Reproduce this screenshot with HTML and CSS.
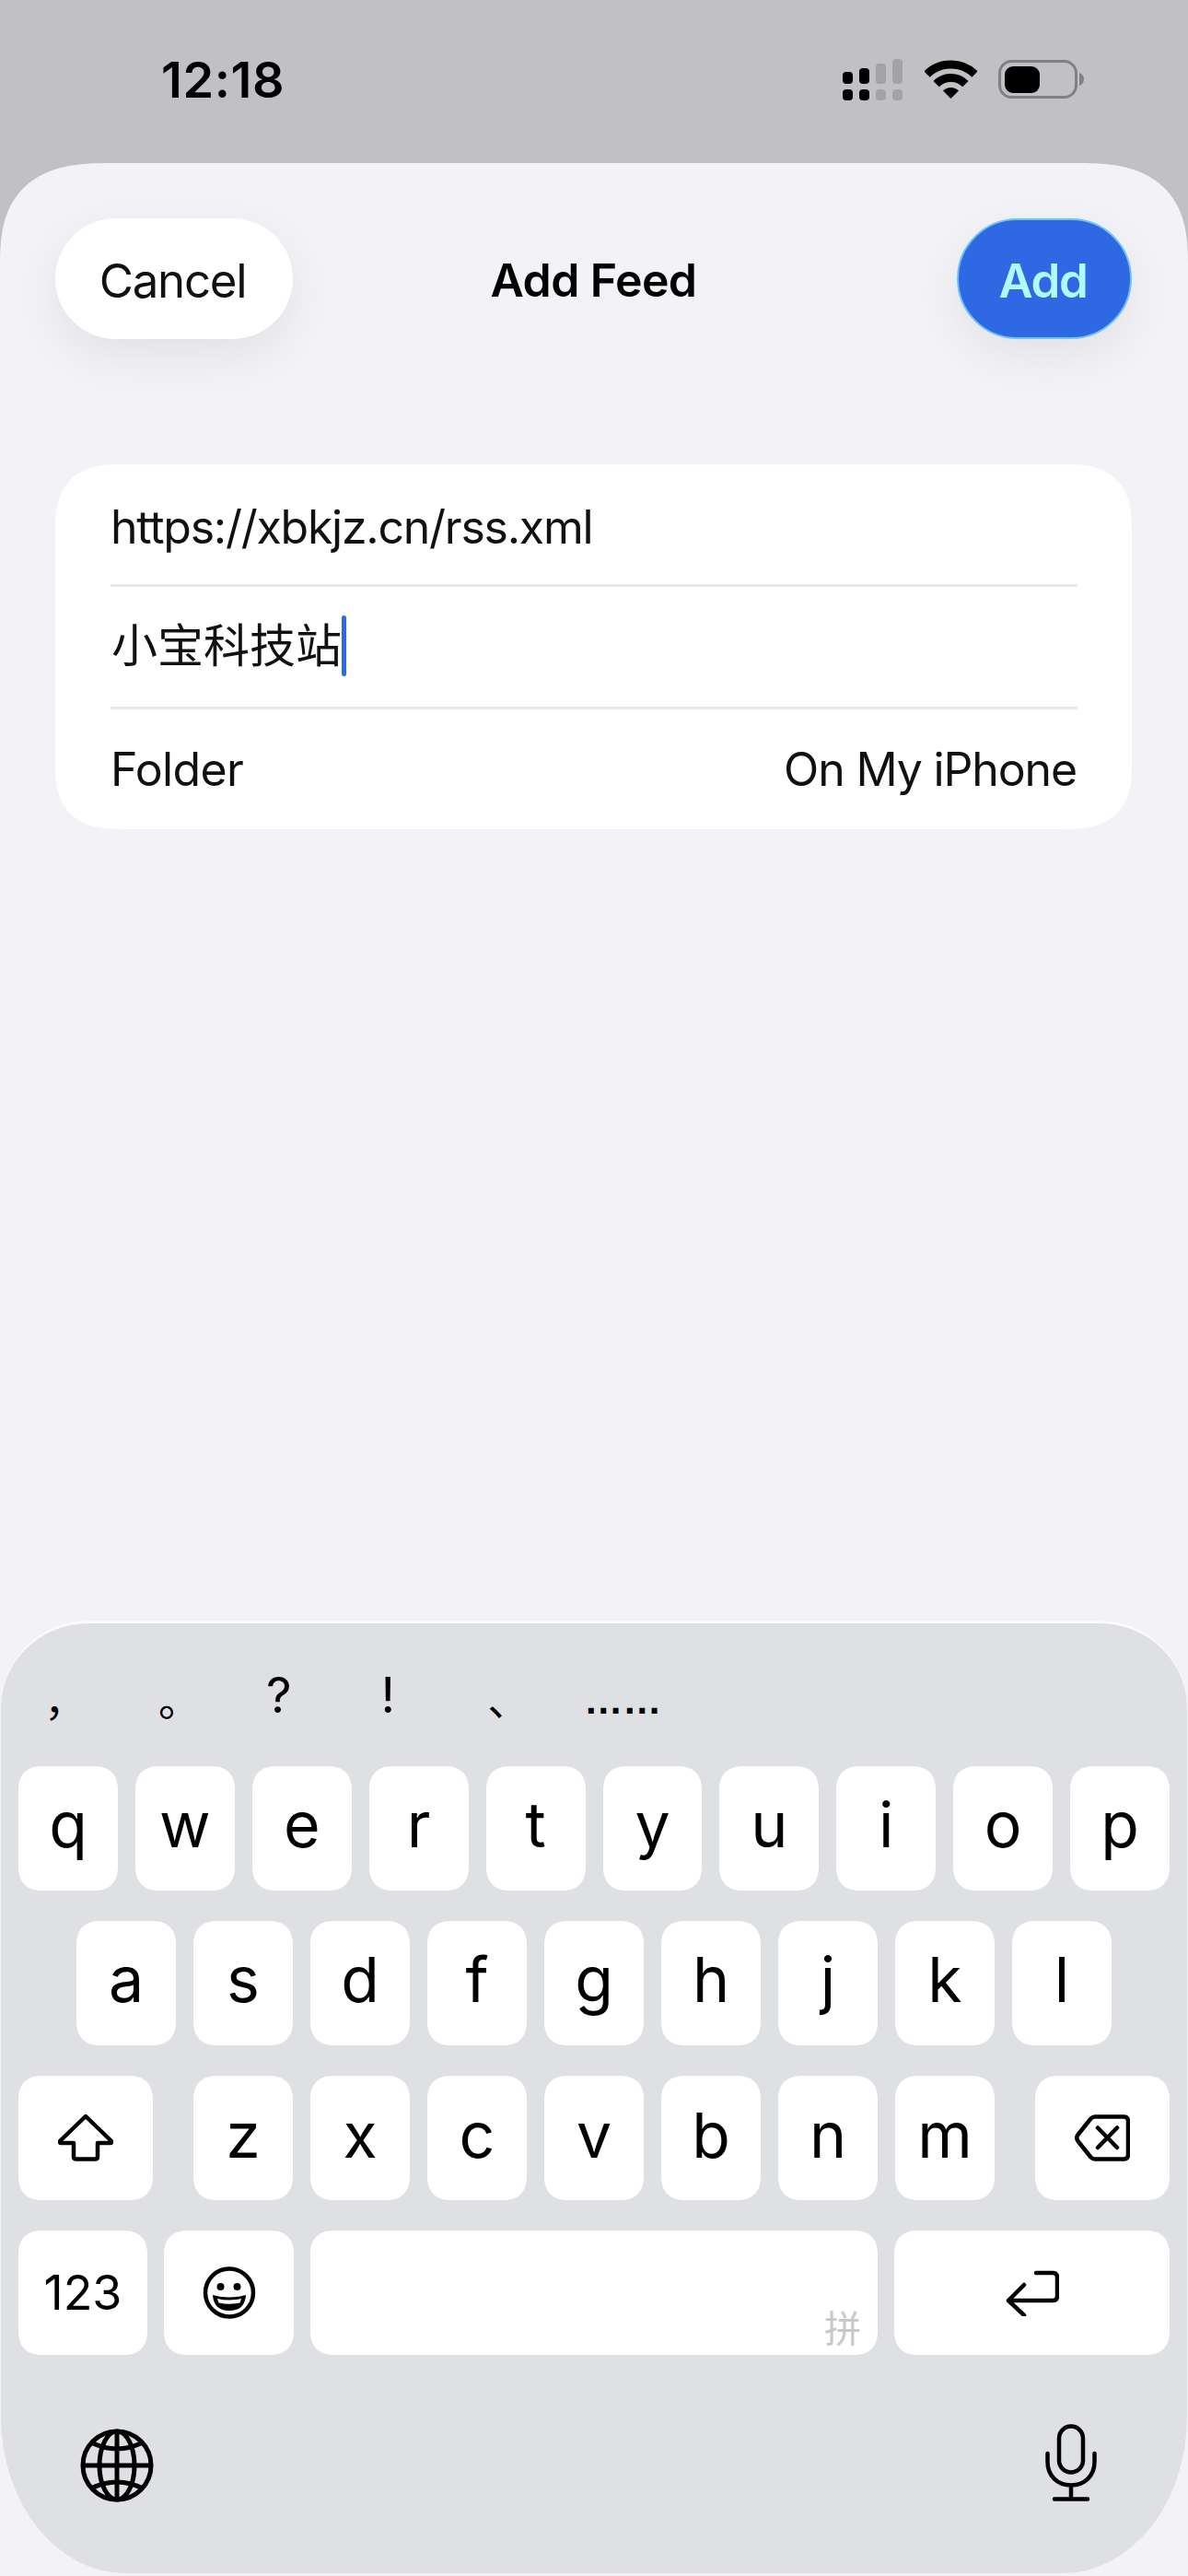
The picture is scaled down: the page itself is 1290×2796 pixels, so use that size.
FILE: index.html
```html
<!DOCTYPE html>
<html lang="en">
<head>
<meta charset="utf-8">
<title>Add Feed</title>
<link rel="stylesheet" href="styles.css">
</head>
<body>
<div class="phone">
  <header class="status">
    <div class="time">12:18</div>
    <div class="status-icons">
      <svg class="ic-signal" width="66" height="45" viewBox="0 0 66 45">
        <g fill="#000"><rect x="0" y="14" width="11" height="13" rx="4"/><rect x="18" y="10" width="11" height="17" rx="4"/><rect x="0" y="33" width="11" height="12" rx="4"/><rect x="18" y="33" width="11" height="12" rx="4"/></g>
        <g fill="#a3a3a7"><rect x="36" y="5" width="11" height="22" rx="4"/><rect x="54" y="0" width="11" height="27" rx="4"/><rect x="36" y="33" width="11" height="12" rx="4"/><rect x="54" y="33" width="11" height="12" rx="4"/></g>
      </svg>
      <svg class="ic-wifi" width="57" height="42" viewBox="0 0 57 42">
        <path d="M2.5 15.5A37.5 37.5 0 0 1 54.5 15.5M12.6 26.1A22.5 22.5 0 0 1 44.4 26.1" fill="none" stroke="#000" stroke-width="9"/>
        <path d="M28.5 42L20 33.5A12 12 0 0 1 37 33.5Z" fill="#000"/>
      </svg>
      <svg class="ic-batt" width="93" height="42" viewBox="0 0 93 42">
        <rect x="1.5" y="1.5" width="83" height="39" rx="13" fill="none" stroke="#808085" stroke-width="3"/>
        <rect x="7" y="7" width="38" height="29" rx="9" fill="#000"/>
        <path d="M88 14C91 15 93 18 93 21C93 24 91 27 88 28Z" fill="#808085"/>
      </svg>
    </div>
  </header>

  <main class="sheet">
    <nav class="nav">
      <div class="pill pill-cancel">Cancel</div>
      <div class="nav-title">Add Feed</div>
      <div class="pill pill-add">Add</div>
    </nav>

    <section class="card">
      <div class="row"><span class="url">https://xbkjz.cn/rss.xml</span></div>
      <div class="sep"></div>
      <div class="row"><span class="cjk" lang="zh-CN">小宝科技站</span><span class="caret"></span></div>
      <div class="sep"></div>
      <div class="row row-split"><span class="lbl">Folder</span><span class="val">On My iPhone</span></div>
    </section>

    <section class="keyboard">
      <div class="cands" lang="zh-CN">
        <span class="cand cand-comma">，</span>
        <span class="cand cand-period">。</span>
        <span class="cand latin cand-q">?</span>
        <span class="cand latin cand-ex">!</span>
        <span class="cand cand-pause">、</span>
        <span class="cand dots">……</span>
      </div>
      <div class="keys">
        <div class="krow krow-1">
          <div class="key">q</div><div class="key">w</div><div class="key">e</div><div class="key">r</div><div class="key">t</div><div class="key">y</div><div class="key">u</div><div class="key">i</div><div class="key">o</div><div class="key">p</div>
        </div>
        <div class="krow krow-2">
          <div class="key">a</div><div class="key">s</div><div class="key">d</div><div class="key">f</div><div class="key">g</div><div class="key">h</div><div class="key">j</div><div class="key">k</div><div class="key">l</div>
        </div>
        <div class="krow krow-3">
          <div class="key key-mod">
            <svg width="60" height="51" viewBox="0 0 60 51"><path d="M30 2L2.5 28.5Q1 31 3.5 31H17V45.500Q17 48.500 20 48.500H40Q43 48.500 43 45.500V31H56.500Q59 31 57.500 28.500Z" fill="none" stroke="#000" stroke-width="4.500" stroke-linejoin="round"/></svg>
          </div>
          <div class="letters">
            <div class="key">z</div><div class="key">x</div><div class="key">c</div><div class="key">v</div><div class="key">b</div><div class="key">n</div><div class="key">m</div>
          </div>
          <div class="key key-mod">
            <svg width="60" height="51" viewBox="0 0 60 51"><path d="M22 2.500H53Q58 2.500 58 7.500V43.500Q58 48.500 53 48.500H22Q19.500 48.500 17.500 46.500L3.500 29Q1 25.500 3.500 22L17.500 4.500Q19.500 2.500 22 2.500ZM25 14.500L46 36M46 14.500L25 36" fill="none" stroke="#000" stroke-width="4.500" stroke-linejoin="round" stroke-linecap="round"/></svg>
          </div>
        </div>
        <div class="krow krow-4">
          <div class="key key-123">123</div>
          <div class="key key-emoji">
            <svg width="58" height="57" viewBox="0 0 58 57"><circle cx="29" cy="28.500" r="26" fill="none" stroke="#000" stroke-width="4.500"/><circle cx="19.500" cy="22" r="4" fill="#000"/><circle cx="37.500" cy="22" r="4" fill="#000"/><path d="M11 31Q29 36 47 31Q46 48 29 48Q12 48 11 31Z" fill="#000"/><path d="M16 35Q29 38 42 35L40.500 39.500Q29 42 17.500 39.500Z" fill="#fff"/></svg>
          </div>
          <div class="key key-space"><span class="pinyin" lang="zh-CN">拼</span></div>
          <div class="key key-return">
            <svg width="58" height="50" viewBox="0 0 58 50"><path d="M33 3H51Q56 3 56 8V28Q56 33 51 33H3M20 16L3 33L20 49" fill="none" stroke="#000" stroke-width="4.500" stroke-linecap="round" stroke-linejoin="round"/></svg>
          </div>
        </div>
      </div>
      <div class="kb-bottom">
        <svg class="ic-globe" width="80" height="80" viewBox="0 0 80 80"><g fill="none" stroke="#000" stroke-width="5"><circle cx="40" cy="40" r="37"/><ellipse cx="40" cy="40" rx="19" ry="37"/><path d="M40 3V77M3 40H77M12 15Q40 29 68 15M12 65Q40 51 68 65"/></g></svg>
        <svg class="ic-mic" width="56" height="84" viewBox="0 0 56 84"><g fill="none" stroke="#000" stroke-width="4.500" stroke-linecap="round"><rect x="15" y="2.500" width="26" height="50" rx="13"/><path d="M2.500 32V41C2.500 56 13 66.500 28 66.500C43 66.500 53.500 56 53.500 41V32M28 66.500V81M10 81.500H46"/></g></svg>
      </div>
    </section>
  </main>
</div>
</body>
</html>
```

FILE: styles.css
```css
* { box-sizing: border-box; }
html, body { margin: 0; padding: 0; }
body {
  width: 1290px;
  height: 2796px;
  overflow: hidden;
  background: #c1c0c5;
  color: #000;
  font-family: Inter, "Noto Sans CJK SC", sans-serif;
}
.phone { display: flex; flex-direction: column; height: 2796px; }

.status { height: 177px; flex: none; display: flex; align-items: flex-start; padding: 59px 113px 0 175px; }
.time { font-size: 54px; font-weight: 600; line-height: 56px; letter-spacing: 0.6px; }
.status-icons { margin-left: auto; margin-top: 5px; display: flex; align-items: flex-start; gap: 23px; }
.status-icons svg { display: block; }
.ic-wifi, .ic-batt { margin-top: 1px; }

.sheet {
  flex: 1;
  display: flex;
  flex-direction: column;
  background: #f2f2f7;
  border-radius: 118px 118px 0 0 / 110px 110px 0 0;
  corner-shape: superellipse(1.4);
}

.nav {
  display: grid;
  grid-template-columns: 1fr auto 1fr;
  align-items: center;
  margin: 60px 61px 0 60px;
}
.pill {
  height: 131px;
  border-radius: 66px;
  display: flex;
  align-items: center;
  justify-content: center;
  font-size: 51px;
  letter-spacing: -1.3px;
  padding-top: 3px;
}
.pill-cancel {
  width: 258px;
  justify-self: start;
  background: #fff;
  color: #111;
  padding-right: 3px;
  box-shadow: 0 18px 50px rgba(0, 0, 0, 0.07);
}
.pill-add {
  width: 190px;
  justify-self: end;
  background: #2f68e3;
  border: 2px solid #6cc3f4;
  color: #aefbff;
  font-weight: 600;
  padding-right: 3px;
  box-shadow: 0 18px 50px rgba(0, 0, 0, 0.07);
}
.nav-title { font-size: 50px; font-weight: 600; letter-spacing: -0.6px; padding-top: 3px; }

.card {
  margin: 136px 61px 0 60px;
  background: #fff;
  border-radius: 72px;
  corner-shape: superellipse(1.4);
  padding: 0 59px 0 60px;
}
.row { height: 130px; display: flex; align-items: center; font-size: 50px; color: #111; }
.row-split { justify-content: space-between; }
.sep { height: 3px; background: #e8e8ea; }
.url { letter-spacing: -1.25px; padding-top: 5px; }
.lbl { letter-spacing: -0.7px; }
.val { letter-spacing: -1.15px; margin-right: 1px; }
.cjk { font-family: "Noto Sans CJK SC", sans-serif; font-size: 50px; margin-left: 1px; padding-bottom: 10px; }
.caret { width: 5px; height: 66px; margin-bottom: 3px; border-radius: 3px; background: #2f68e3; }

.keyboard {
  margin: auto 1px 3px;
  height: 1034px;
  background: #dfe0e4;
  border-top: 3px solid #fbfbfd;
  border-radius: 95px 95px 135px 135px / 95px 95px 170px 170px;
}
.cands { height: 155px; display: flex; font-size: 46px; }
.cand { padding-top: 50px; line-height: 60px; text-align: center; font-family: "Noto Sans CJK SC", sans-serif; }
.cand-comma { margin-left: 47px; }
.cand-period { margin-left: 78px; }
.cand-q { margin-left: 71px; }
.cand-ex { margin-left: 97px; }
.cand-pause { margin-left: 100px; }
.latin { font-family: Inter, sans-serif; font-size: 54px; padding-top: 48px; }
.dots { margin-left: 59px; padding-top: 54px; font-family: "Liberation Sans", sans-serif; font-size: 42px; font-weight: 700; }

.keys { display: flex; flex-direction: column; gap: 33px; }
.krow { display: flex; height: 135px; gap: 19px; }
.krow-1 { padding: 0 19px; }
.krow-2 { padding: 0 82px; }
.krow-3 { padding: 0 19px; gap: 44px; }
.krow-4 { padding: 0 19px; gap: 18px; }
.letters { display: flex; gap: 19px; }
.key {
  flex: 1;
  background: #fff;
  border-radius: 27px;
  corner-shape: superellipse(1.3);
  display: flex;
  align-items: center;
  justify-content: center;
  font-size: 68px;
  line-height: 1;
  padding-bottom: 10px;
}
.letters .key { width: 108px; flex: none; padding-bottom: 8px; }
.key-mod { width: 146px; flex: none; padding-bottom: 0; }
.key-123 { width: 140px; flex: none; font-size: 52px; padding-bottom: 0; }
.key-emoji { width: 141px; flex: none; padding-bottom: 0; }
.key-space {
  width: 616px;
  flex: none;
  justify-content: flex-end;
  align-items: flex-end;
  padding: 0 18px 11px 0;
}
.key-return { width: 299px; flex: none; padding-bottom: 0; }
.pinyin { font-family: "Noto Sans CJK SC", sans-serif; font-size: 40px; font-weight: 400; color: #c8c8ca; line-height: 1; }

.kb-bottom { display: flex; justify-content: space-between; align-items: flex-start; padding: 75px 98px 0 86px; }
.kb-bottom svg { display: block; }
.ic-globe { margin-top: 5px; }
```
